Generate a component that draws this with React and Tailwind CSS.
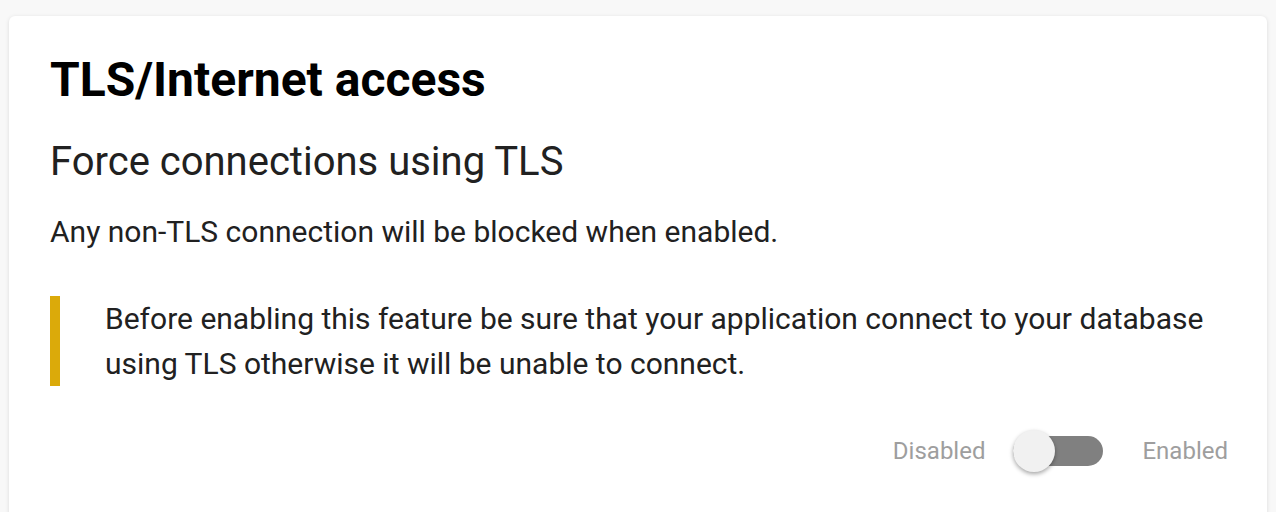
const App = () => {
  return (
    <div className="min-h-[512px] bg-[#f8f8f8] px-[9px] pt-[16px]" style={{ fontFamily: 'Roboto, "Noto Sans", sans-serif' }}>
      <div className="bg-white rounded-[6px] shadow-[0_1px_4px_rgba(0,0,0,0.12)] px-[41px] pt-[36px] pb-[40px] min-h-[520px]">
        <h1 className="text-[48px] leading-[56px] font-bold text-black">TLS/Internet access</h1>
        <h2 className="mt-[30px] text-[40px] leading-[48px] font-normal text-[#212121]">Force connections using TLS</h2>
        <p className="mt-[26px] text-[30px] leading-[40px] text-[#212121]">
          Any non-TLS connection will be blocked when enabled.
        </p>
        <div className="mt-[44px] border-l-[10px] border-[#dbaa0a] pl-[45px]">
          <p className="text-[30px] leading-[45px] text-[#212121]">
            Before enabling this feature be sure that your application connect to your database
            <br />
            using TLS otherwise it will be unable to connect.
          </p>
        </div>
        <div className="mt-[47px] -mr-[2px] flex items-center justify-end gap-[28px] text-[24px] leading-[36px] text-[#9e9e9e]">
          <span>Disabled</span>
          <div className="relative w-[90px] h-[30px] rounded-full bg-[#808080]">
            <div className="absolute left-0 top-[-6px] w-[42px] h-[42px] rounded-full bg-[#f1f1f1] shadow-[0_2px_4px_rgba(0,0,0,0.35)]" />
          </div>
          <span className="ml-[11px]">Enabled</span>
        </div>
      </div>
    </div>
  );
};

export default App;
